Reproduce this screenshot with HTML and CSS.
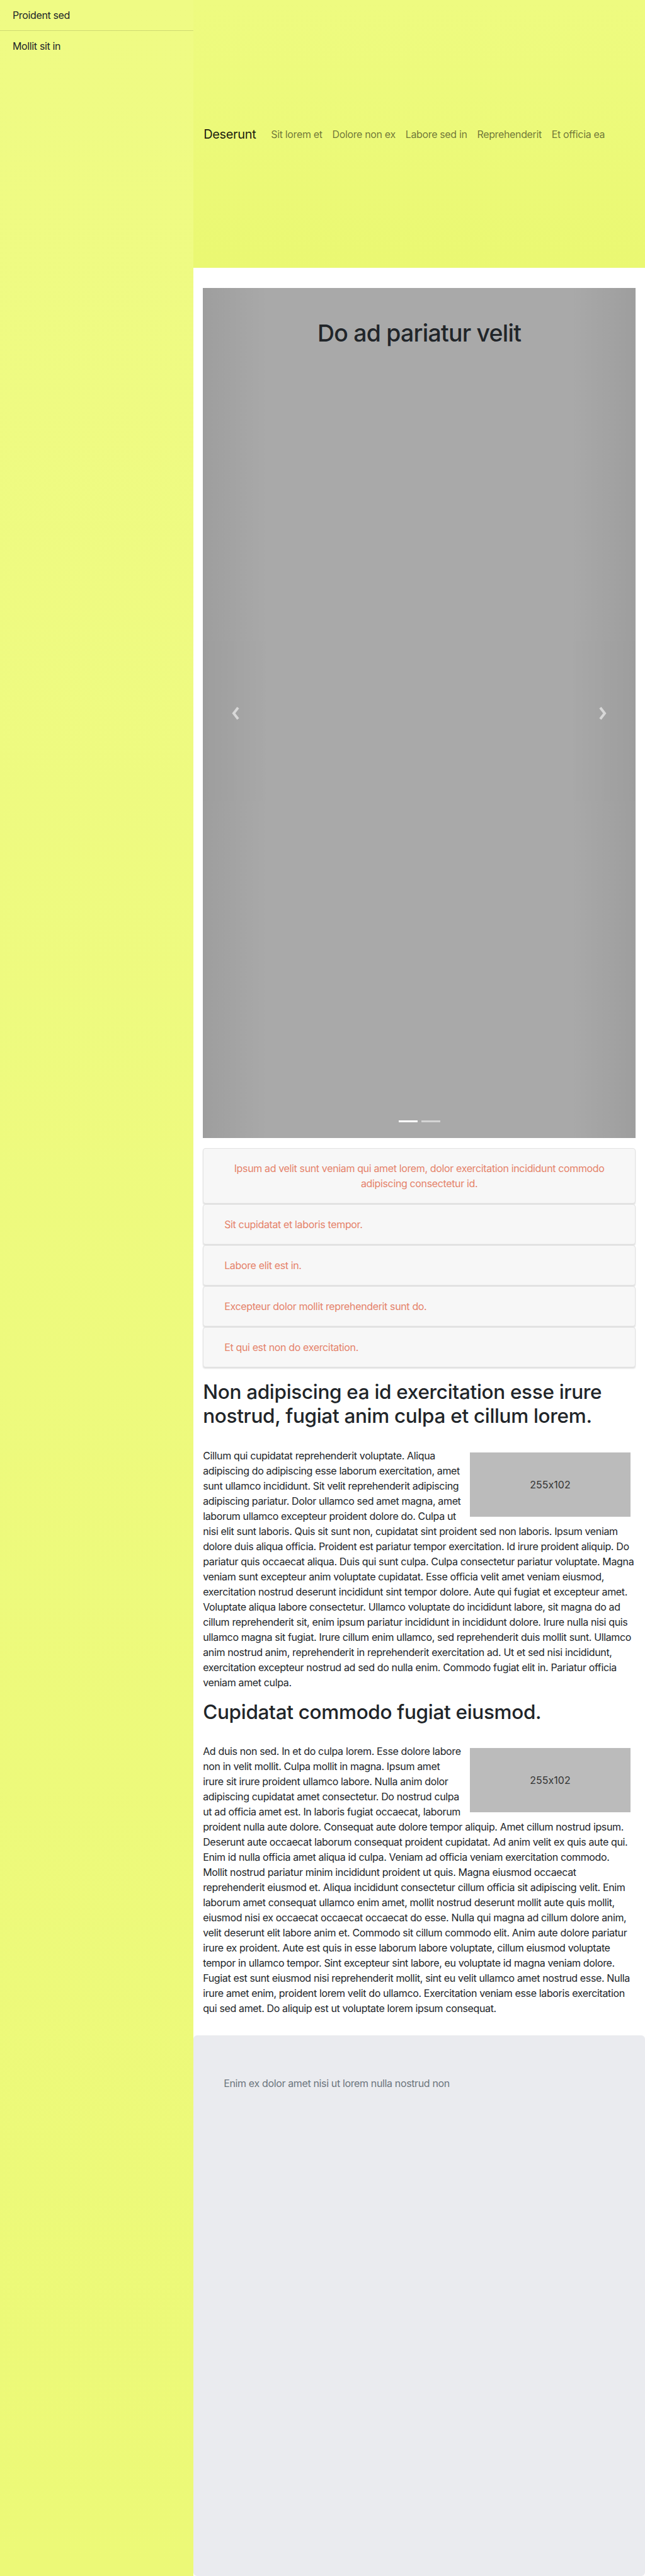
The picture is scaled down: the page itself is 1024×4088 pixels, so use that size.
FILE: index.html
```html
<!DOCTYPE html>
<html lang="la">
<head>
<meta charset="utf-8">
<title>Deserunt</title>
<link rel="stylesheet" href="styles.css">
</head>
<body>
<div class="layout">
  <aside class="sidebar">
    <ul class="side-list">
      <li class="side-item">Proident sed</li>
      <li class="side-item">Mollit sit in</li>
    </ul>
  </aside>
  <div class="main-col">
    <header class="topbar">
      <nav class="navbar">
        <span class="brand">Deserunt</span>
        <a class="nav-link" href="#">Sit lorem et</a>
        <a class="nav-link" href="#">Dolore non ex</a>
        <a class="nav-link" href="#">Labore sed in</a>
        <a class="nav-link" href="#">Reprehenderit</a>
        <a class="nav-link" href="#">Et officia ea</a>
      </nav>
    </header>
    <main class="content">
      <section class="carousel">
        <h1 class="carousel-title">Do ad pariatur velit</h1>
        <a class="carousel-control prev" href="#" aria-label="Previous">
          <svg width="14" height="22" viewBox="0 0 14 22"><path d="M11 2 L4 11 L11 20" fill="none" stroke="#fff" stroke-width="4"/></svg>
        </a>
        <a class="carousel-control next" href="#" aria-label="Next">
          <svg width="14" height="22" viewBox="0 0 14 22"><path d="M3 2 L10 11 L3 20" fill="none" stroke="#fff" stroke-width="4"/></svg>
        </a>
        <div class="indicators">
          <span class="indicator active"></span>
          <span class="indicator"></span>
        </div>
      </section>
      <ul class="list-group">
        <li class="list-item centered">Ipsum ad velit sunt veniam qui amet lorem, dolor exercitation incididunt commodo adipiscing consectetur id.</li>
        <li class="list-item">Sit cupidatat et laboris tempor.</li>
        <li class="list-item">Labore elit est in.</li>
        <li class="list-item">Excepteur dolor mollit reprehenderit sunt do.</li>
        <li class="list-item">Et qui est non do exercitation.</li>
      </ul>
      <h2 class="section-title">Non adipiscing ea id exercitation esse irure nostrud, fugiat anim culpa et cillum lorem.</h2>
      <div class="placeholder">255x102</div>
      <p class="text">Cillum qui cupidatat reprehenderit voluptate. Aliqua adipiscing do adipiscing esse laborum exercitation, amet sunt ullamco incididunt. Sit velit reprehenderit adipiscing adipiscing pariatur. Dolor ullamco sed amet magna, amet laborum ullamco excepteur proident dolore do. Culpa ut nisi elit sunt laboris. Quis sit sunt non, cupidatat sint proident sed non laboris. Ipsum veniam dolore duis aliqua officia. Proident est pariatur tempor exercitation. Id irure proident aliquip. Do pariatur quis occaecat aliqua. Duis qui sunt culpa. Culpa consectetur pariatur voluptate. Magna veniam sunt excepteur anim voluptate cupidatat. Esse officia velit amet veniam eiusmod, exercitation nostrud deserunt incididunt sint tempor dolore. Aute qui fugiat et excepteur amet. Voluptate aliqua labore consectetur. Ullamco voluptate do incididunt labore, sit magna do ad cillum reprehenderit sit, enim ipsum pariatur incididunt in incididunt dolore. Irure nulla nisi quis ullamco magna sit fugiat. Irure cillum enim ullamco, sed reprehenderit duis mollit sunt. Ullamco anim nostrud anim, reprehenderit in reprehenderit exercitation ad. Ut et sed nisi incididunt, exercitation excepteur nostrud ad sed do nulla enim. Commodo fugiat elit in. Pariatur officia veniam amet culpa.</p>
      <h2 class="section-title">Cupidatat commodo fugiat eiusmod.</h2>
      <div class="placeholder">255x102</div>
      <p class="text">Ad duis non sed. In et do culpa lorem. Esse dolore labore non in velit mollit. Culpa mollit in magna. Ipsum amet irure sit irure proident ullamco labore. Nulla anim dolor adipiscing cupidatat amet consectetur. Do nostrud culpa ut ad officia amet est. In laboris fugiat occaecat, laborum proident nulla aute dolore. Consequat aute dolore tempor aliquip. Amet cillum nostrud ipsum. Deserunt aute occaecat laborum consequat proident cupidatat. Ad anim velit ex quis aute qui. Enim id nulla officia amet aliqua id culpa. Veniam ad officia veniam exercitation commodo. Mollit nostrud pariatur minim incididunt proident ut quis. Magna eiusmod occaecat reprehenderit eiusmod et. Aliqua incididunt consectetur cillum officia sit adipiscing velit. Enim laborum amet consequat ullamco enim amet, mollit nostrud deserunt mollit aute quis mollit, eiusmod nisi ex occaecat occaecat occaecat do esse. Nulla qui magna ad cillum dolore anim, velit deserunt elit labore anim et. Commodo sit cillum commodo elit. Anim aute dolore pariatur irure ex proident. Aute est quis in esse laborum labore voluptate, cillum eiusmod voluptate tempor in ullamco tempor. Sint excepteur sint labore, eu voluptate id magna veniam dolore. Fugiat est sunt eiusmod nisi reprehenderit mollit, sint eu velit ullamco amet nostrud esse. Nulla irure amet enim, proident lorem velit do ullamco. Exercitation veniam esse laboris exercitation qui sed amet. Do aliquip est ut voluptate lorem ipsum consequat.</p>
    </main>
    <footer class="footer">
      <p class="footer-text">Enim ex dolor amet nisi ut lorem nulla nostrud non</p>
    </footer>
  </div>
</div>
</body>
</html>
```
FILE: styles.css
```css
* { box-sizing: border-box; }

html, body {
  margin: 0;
  padding: 0;
}

body {
  font-family: Inter, "Noto Sans", "Liberation Sans", sans-serif;
  font-size: 16px;
  line-height: 1.5;
  letter-spacing: -0.0225em;
  color: #212529;
  background: #fff;
}

.layout {
  display: grid;
  grid-template-columns: 30% 70%;
  min-height: 100vh;
}

/* Sidebar */
.sidebar {
  background: linear-gradient(180deg, #effb84 0%, #ecf977 100%);
}

.side-list {
  list-style: none;
  margin: 0;
  padding: 0;
}

.side-item {
  padding: 12px 20px;
  color: #212529;
}

.side-item + .side-item {
  border-top: 1px solid rgba(0, 0, 0, 0.13);
}

/* Main column */
.main-col {
  display: flex;
  flex-direction: column;
  min-height: 100vh;
  background: #fff;
}

.topbar {
  height: 425px;
  display: flex;
  align-items: center;
  padding: 0 16px;
  background: linear-gradient(180deg, #eefb80 0%, #eaf872 100%);
}

.navbar {
  display: flex;
  align-items: center;
}

.brand {
  font-size: 20px;
  color: rgba(0, 0, 0, 0.9);
  margin-right: 16px;
  line-height: 30px;
}

.nav-link {
  padding: 8px;
  color: rgba(0, 0, 0, 0.55);
  text-decoration: none;
}

.content {
  padding: 32px 15px 15px;
}

/* Carousel */
.carousel {
  position: relative;
  height: 1349px;
  background: #a9a9a9;
  overflow: hidden;
}

.carousel-title {
  margin: 0;
  padding-top: 50px;
  text-align: center;
  font-size: 37.4px;
  font-weight: 500;
  line-height: 1.2;
  color: #212529;
  letter-spacing: -0.02em;
}

.carousel-control {
  position: absolute;
  top: 0;
  bottom: 0;
  width: 15%;
  display: flex;
  align-items: center;
  justify-content: center;
  opacity: 0.55;
}

.carousel-control.prev {
  left: 0;
  background: linear-gradient(90deg, rgba(0, 0, 0, 0.12), rgba(0, 0, 0, 0));
}

.carousel-control.next {
  right: 0;
  background: linear-gradient(270deg, rgba(0, 0, 0, 0.12), rgba(0, 0, 0, 0));
}

.indicators {
  position: absolute;
  left: 0;
  right: 0;
  bottom: 25px;
  display: flex;
  justify-content: center;
  gap: 6px;
}

.indicator {
  width: 30px;
  height: 3px;
  background: rgba(255, 255, 255, 0.5);
}

.indicator.active {
  background: #fff;
}

/* List group */
.list-group {
  list-style: none;
  margin: 16px 0 20px;
  padding: 0;
}

.list-item {
  padding: 19px 33px;
  margin-bottom: 1px;
  background: #f7f7f7;
  border: 1px solid #e2e2e2;
  border-radius: 4px;
  box-shadow: 0 2px 2px rgba(0, 0, 0, 0.12);
  color: #e5826a;
}

.list-item.centered {
  text-align: center;
}

/* Text sections */
.section-title {
  margin: 0 0 32px;
  font-size: 31.5px;
  font-weight: 500;
  line-height: 1.2;
  color: #212529;
  letter-spacing: -0.01em;
}

.text {
  margin: 0 0 16px;
}

.placeholder {
  float: right;
  width: 255px;
  height: 102px;
  margin: 7px 8px 8px 12px;
  background: #bbbbbb;
  color: #333;
  display: flex;
  align-items: center;
  justify-content: center;
  font-feature-settings: "calt" 0;
  letter-spacing: 0;
}

/* Footer */
.footer {
  flex: 1;
  background: #eaebef;
  border-radius: 6px;
  padding: 64px 48px;
}

.footer-text {
  margin: 0;
  color: #6c757d;
}
```
